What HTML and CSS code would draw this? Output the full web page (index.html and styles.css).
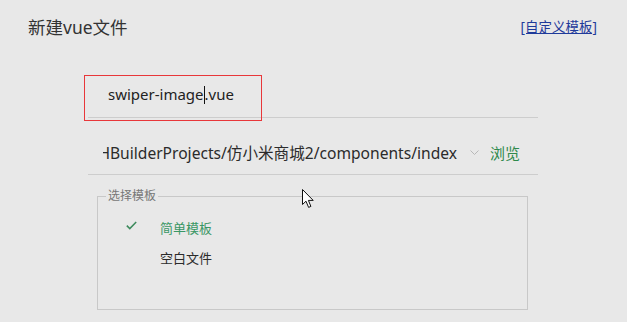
FILE: index.html
```html
<!DOCTYPE html>
<html lang="zh-CN">
<head>
<meta charset="UTF-8">
<title>新建vue文件</title>
<link rel="stylesheet" href="styles.css">
</head>
<body>

<!-- HEADER -->
<div class="header">
  <h1 class="title">新建vue文件</h1>
  <a href="#" class="custom">[自定义模板]</a>
</div>

<!-- FORM -->
<div class="form">
  <div class="name-row">
    <span class="name">swiper-image<span class="caret"></span>.vue</span>
    <div class="highlight"></div>
  </div>

  <div class="path-row">
    <div class="path"><span>C:/Users/Administrator/Documents/HBuilderProjects/仿小米商城2/components/index</span></div>
    <svg class="chevron" width="9" height="5" viewBox="0 0 9 5"><path d="M0.5 0.5 L4.5 4.5 L8.5 0.5" fill="none" stroke="#b8b8b8" stroke-width="1"/></svg>
    <a href="#" class="browse">浏览</a>
  </div>

  <fieldset class="templates">
    <legend>选择模板</legend>
    <div class="options">
      <div class="option active">
        <svg class="check" width="11" height="9" viewBox="0 0 11 9"><path d="M0.8 4.6 L3.8 7.6 L10.2 1" fill="none" stroke="#3c8a5c" stroke-width="1.5"/></svg>
        <span>简单模板</span>
      </div>
      <div class="option">
        <span></span>
        <span>空白文件</span>
      </div>
    </div>
  </fieldset>
</div>

<!-- MOUSE POINTER -->
<svg class="pointer" width="13" height="20" viewBox="0 0 13 20"><path d="M0.5 0.5 L0.5 15.5 L4 12.2 L6.6 18.4 L8.9 17.4 L6.4 11.4 L11.2 11.4 Z" fill="#fff" stroke="#111" stroke-width="1" stroke-linejoin="miter"/></svg>

</body>
</html>
```

FILE: styles.css
```css
body {
  margin: 0;
  background: #e8e8e8;
  font-family: "Noto Sans", "Noto Sans CJK SC", sans-serif;
  color: #2b2b2b;
  position: relative;
  height: 322px;
  overflow: hidden;
}
.header {
  display: flex;
  justify-content: space-between;
  align-items: center;
  padding: 15px 30px 0 28px;
}
.title {
  margin: 0;
  font-size: 17.5px;
  font-weight: normal;
  line-height: 24px;
  color: #333;
}
.custom {
  font-size: 13.5px;
  color: #1f3a9a;
  text-decoration: underline;
  margin-top: -3px;
}
.form {
  margin-left: 88px;
  width: 450px;
}
.name-row {
  position: relative;
  margin-top: 36px;
  height: 42px;
  border-bottom: 1px solid #cdcdcd;
  display: flex;
  align-items: center;
  padding-left: 20px;
}
.name {
  font-size: 15px;
  color: #222;
  margin-top: -5px;
}
.caret {
  display: inline-block;
  width: 1px;
  height: 18px;
  background: #111;
  vertical-align: -4px;
}
.highlight {
  position: absolute;
  left: -4px;
  top: 0;
  width: 176px;
  height: 44px;
  border: 1px solid #e8373a;
}
.path-row {
  height: 43px;
  padding: 13px 0 0 15px;
  border-bottom: 1px solid #cdcdcd;
  display: flex;
  align-items: center;
}
.path {
  flex: 0 0 354px;
  min-width: 0;
  overflow: hidden;
  white-space: nowrap;
  direction: rtl;
  text-align: left;
  font-size: 15.6px;
  color: #2b2b2b;
}
.path span {
  direction: ltr;
  unicode-bidi: embed;
}
.chevron {
  margin-left: 13px;
}
.browse {
  margin-left: 11px;
  font-size: 15px;
  color: #2f8a4c;
  text-decoration: none;
}
.templates {
  margin: 13px 0 0 9px;
  width: 431px;
  height: 122px;
  box-sizing: border-box;
  border: 1px solid #c8c8c8;
  padding: 0 0 0 8px;
}
.templates legend {
  font-size: 12px;
  line-height: 16px;
  color: #777;
  padding: 0 2px;
  margin-top: 1px;
}
.options {
  padding-top: 8px;
}
.option {
  display: grid;
  grid-template-columns: 54px auto;
  align-items: center;
  height: 30px;
  font-size: 13px;
  color: #2b2b2b;
}
.option .check {
  margin-left: 20px;
  margin-top: -3px;
}
.option.active {
  color: #3a9765;
}
.pointer {
  position: absolute;
  left: 302px;
  top: 189px;
}
```
